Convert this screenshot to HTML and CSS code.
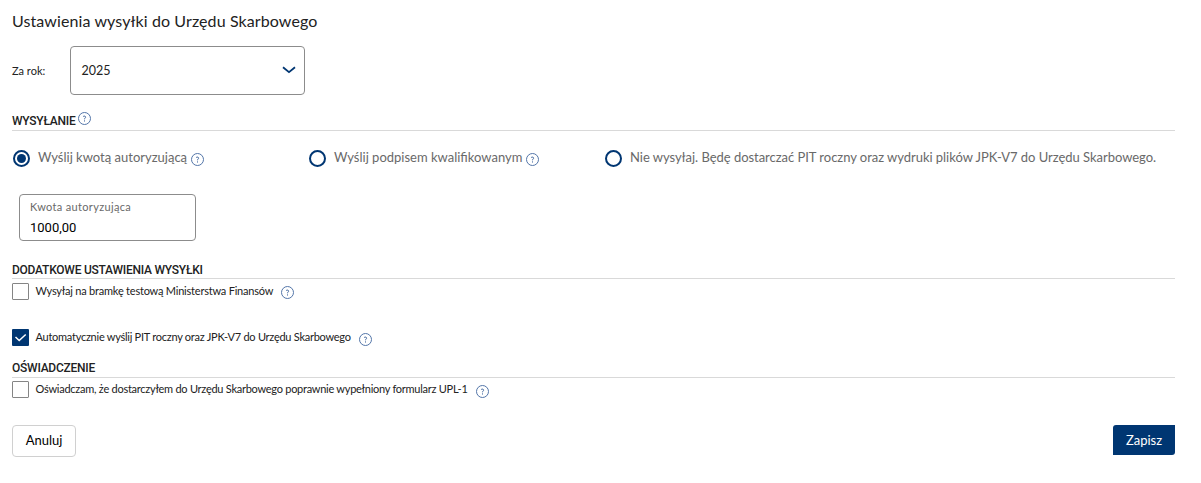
FILE: index.html
```html
<!DOCTYPE html>
<html lang="pl">
<head>
  <meta charset="UTF-8" />
  <meta name="viewport" content="width=device-width,initial-scale=1" />
  <title>Ustawienia wysyłki</title>
  <link rel="stylesheet" href="styles.css">
</head>
<body>
  <svg class="sprite" width="0" height="0">
    <symbol id="help" viewBox="0 0 13 13">
      <circle cx="6.5" cy="6.5" r="6" fill="none" stroke="#5375a8" />
      <path d="M5.2 4.4c1.3-.6 2.5-.2 2.4.8-.1.8-1.1.9-1.1 2.1M6.5 8.4v1.1" fill="none" stroke="#3d639c" />
    </symbol>
  </svg>

  <form class="settings">
    <h1>Ustawienia wysyłki do Urzędu Skarbowego</h1>

    <div class="year-row">
      <span class="year-label">Za rok:</span>
      <div class="select">
        <span>2025</span>
        <svg class="chevron" width="14" height="8" viewBox="0 0 14 8"><path d="M1 1.2l6 5 6-5" fill="none" stroke="#003672" stroke-width="1.8" /></svg>
      </div>
    </div>

    <h2 class="h-send"><span>WYSYŁANIE</span><svg class="help"><use href="#help" /></svg></h2>

    <div class="radios">
      <label class="radio">
        <span class="dot checked"></span><span class="radio-text">Wyślij kwotą autoryzującą</span><svg class="help"><use href="#help" /></svg>
      </label>
      <label class="radio">
        <span class="dot"></span><span class="radio-text">Wyślij podpisem kwalifikowanym</span><svg class="help"><use href="#help" /></svg>
      </label>
      <label class="radio">
        <span class="dot"></span><span class="radio-text radio-long">Nie wysyłaj. Będę dostarczać PIT roczny oraz wydruki plików JPK-V7 do Urzędu Skarbowego.</span>
      </label>
    </div>

    <div class="amount">
      <span class="amount-label">Kwota autoryzująca</span>
      <span class="amount-value">1000,00</span>
    </div>

    <h2 class="h-extra"><span>DODATKOWE USTAWIENIA WYSYŁKI</span></h2>
    <label class="check">
      <span class="box"></span><span class="check-text check-gate">Wysyłaj na bramkę testową Ministerstwa Finansów</span><svg class="help"><use href="#help" /></svg>
    </label>
    <label class="check check-auto">
      <span class="box checked"><svg width="17" height="17" viewBox="0 0 17 17"><path d="M3.5 8l3.7 3.5 6.5-6" fill="none" stroke="#fff" stroke-width="1.5" /></svg></span><span class="check-text">Automatycznie wyślij PIT roczny oraz JPK-V7 do Urzędu Skarbowego</span><svg class="help"><use href="#help" /></svg>
    </label>

    <h2 class="h-statement"><span>OŚWIADCZENIE</span></h2>
    <label class="check check-statement">
      <span class="box"></span><span class="check-text">Oświadczam, że dostarczyłem do Urzędu Skarbowego poprawnie wypełniony formularz UPL-1</span><svg class="help"><use href="#help" /></svg>
    </label>

    <div class="buttons">
      <button type="button" class="cancel">Anuluj</button>
      <button type="button" class="save">Zapisz</button>
    </div>
  </form>
</body>
</html>
```
FILE: styles.css
```css
* {
  box-sizing: border-box;
}
body {
  margin: 0;
  background: #fff;
  color: #222;
  font-family: Lato, "Open Sans", sans-serif;
  font-size: 11px;
}
.sprite {
  display: block;
}
.settings {
  width: 1175px;
  padding: 11px 0 0 12px;
  white-space: nowrap;
}
h1 {
  margin: 0;
  height: 35px;
  line-height: 20px;
  font-size: 16px;
  font-weight: normal;
  letter-spacing: 0.1px;
}
.year-row {
  display: flex;
  align-items: center;
  height: 49px;
}
.year-label {
  width: 58px;
}
.select {
  display: flex;
  align-items: center;
  justify-content: space-between;
  width: 235px;
  height: 49px;
  padding: 0 8px 0 10.5px;
  border: 1px solid #8c8c8c;
  border-radius: 4px;
  font-size: 12.5px;
}
.chevron {
  margin-bottom: 2px;
}
.help {
  flex: none;
  width: 13px;
  height: 13px;
}
h2 {
  display: flex;
  align-items: flex-end;
  margin: 0;
  padding-bottom: 1px;
  border-bottom: 1px solid #d9d9d9;
  font-family: Roboto, sans-serif;
  font-size: 12px;
  line-height: 16px;
  font-weight: 500;
  letter-spacing: -0.24px;
}
.h-send {
  height: 36px;
}
.h-send .help {
  margin: 0 0 4px 3px;
}
.radios {
  display: grid;
  grid-template-columns: 296px 296px auto;
  height: 54px;
  color: #696969;
  font-size: 13px;
}
.radio {
  display: flex;
  align-items: center;
}
.radio-text {
  padding-bottom: 2px;
}
.radio-long {
  letter-spacing: -0.035px;
}
.radio .help {
  margin: 3px 0 0 4px;
}
.dot {
  display: flex;
  align-items: center;
  justify-content: center;
  width: 17px;
  height: 17px;
  margin: 0 8px 0 1px;
  border: 2px solid #003672;
  border-radius: 50%;
}
.dot.checked::after {
  content: "";
  width: 9px;
  height: 9px;
  border-radius: 50%;
  background: #003672;
}
.amount {
  display: flex;
  flex-direction: column;
  width: 177px;
  height: 47px;
  margin: 9px 0 0 7px;
  padding: 3px 10px;
  border: 1px solid #8c8c8c;
  border-radius: 4px;
}
.amount-label {
  height: 22px;
  line-height: 17px;
  color: #696969;
  letter-spacing: 0.33px;
}
.amount-value {
  color: #000;
  font-family: Roboto, sans-serif;
  font-size: 13px;
  line-height: 16px;
}
.h-extra {
  height: 38px;
  padding-bottom: 0;
}
.check {
  display: flex;
  align-items: center;
  height: 17px;
  margin-top: 4px;
}
.check-auto {
  margin-top: 29px;
}
.check-statement {
  margin-top: 3px;
}
.check-text {
  padding-bottom: 2px;
  letter-spacing: -0.26px;
}
.check-gate {
  letter-spacing: -0.21px;
}
.check .help {
  margin: 3px 0 0 8px;
}
.check .check-gate + .help {
  margin-top: 2px;
}
.box {
  width: 17px;
  height: 17px;
  margin-right: 6.5px;
  border: 1px solid #858585;
  border-radius: 1px;
}
.box.checked {
  border: 0;
  background: #003672;
}
.box svg {
  display: block;
}
.h-statement {
  height: 32px;
}
.buttons {
  display: flex;
  justify-content: space-between;
  align-items: flex-start;
  margin-top: 27px;
}
button {
  padding: 0;
  font-family: inherit;
  font-size: 13px;
}
.cancel {
  width: 64px;
  height: 32px;
  padding-bottom: 2px;
  border: 1px solid #d0d0d0;
  border-radius: 4px;
  background: #fff;
  color: #000;
}
.save {
  width: 62px;
  height: 30px;
  border: 0;
  border-radius: 3px 0;
  background: #003672;
  color: #fff;
}
```
